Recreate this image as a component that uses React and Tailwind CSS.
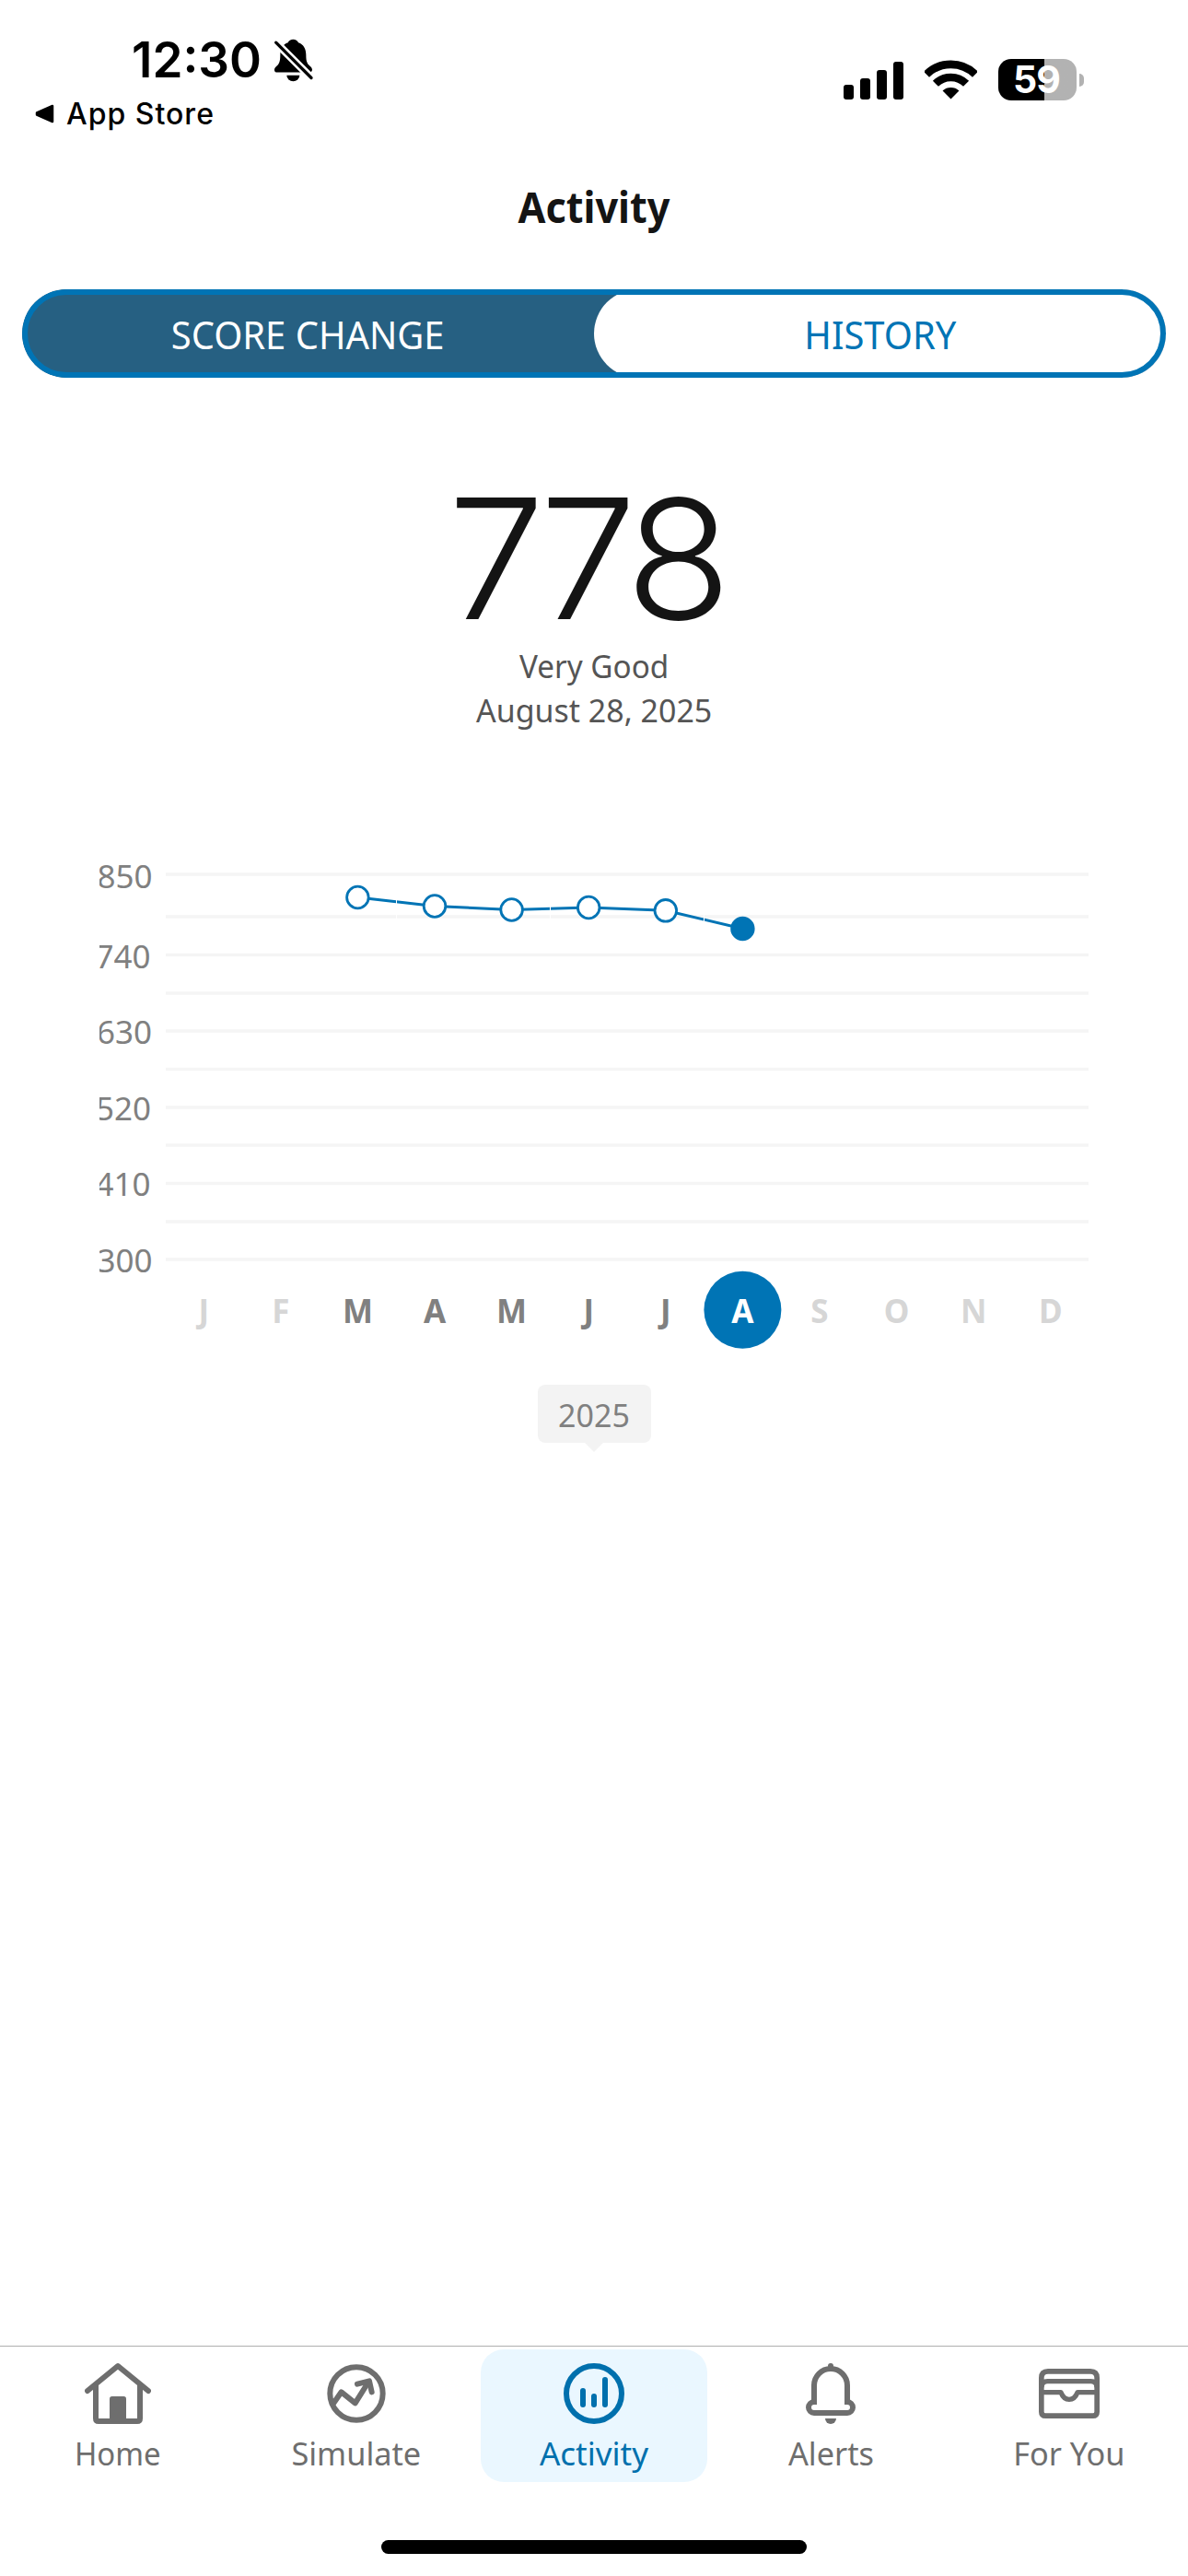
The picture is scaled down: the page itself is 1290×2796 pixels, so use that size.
import React from "react";
import clsx from "clsx";

const MONTHS = ["J", "F", "M", "A", "M", "J", "J", "A", "S", "O", "N", "D"];
const SELECTED_MONTH = 7;

const POINTS = [
  { month: 2, y: 974 },
  { month: 3, y: 983.5 },
  { month: 4, y: 987.5 },
  { month: 5, y: 985 },
  { month: 6, y: 988.3 },
  { month: 7, y: 1008 },
];

const GRID_LINES = [949, 995, 1036.5, 1078, 1119, 1160.5, 1202, 1243, 1284.5, 1326, 1367];

const Y_LABELS = [
  { value: 850, x: 165.5, y: 963.5 },
  { value: 740, x: 163.5, y: 1050.5 },
  { value: 630, x: 165, y: 1133 },
  { value: 520, x: 164, y: 1215.5 },
  { value: 410, x: 163.5, y: 1298 },
  { value: 300, x: 165.5, y: 1380.5 },
];

const monthX = (i) => 221.2 + i * 83.6;

const HomeIcon = () => (
  <svg viewBox="0 0 216 216" className="w-18 h-18" fill="none" stroke="currentColor" strokeWidth="18">
    <path d="M9 99L108 18l99 81" strokeLinecap="round" strokeLinejoin="round" />
    <path d="M36 79v110q0 9 9 9h126q9 0 9-9V79" />
    <path d="M81 200v-75q0-8 8-8h38q8 0 8 8v75z" fill="currentColor" stroke="none" />
  </svg>
);

const SimulateIcon = () => (
  <svg viewBox="0 0 216 216" className="w-18 h-18" fill="none" stroke="currentColor" strokeWidth="18">
    <circle cx="108" cy="108" r="86" />
    <path d="M33 140l26-37 45 36 44-70" strokeLinejoin="round" />
    <path d="M111 77l39-10 8 36" strokeLinecap="round" strokeLinejoin="round" />
  </svg>
);

const ActivityIcon = () => (
  <svg viewBox="0 0 216 216" className="w-18 h-18" fill="none" stroke="currentColor" strokeWidth="18">
    <circle cx="108" cy="108" r="90" />
    <path d="M72 99v45M108 117v27M144 63v81" strokeLinecap="round" />
  </svg>
);

const AlertsIcon = () => (
  <svg viewBox="0 0 216 216" className="w-18 h-18" fill="none" stroke="currentColor" strokeWidth="18">
    <path d="M54 144V81a54 54 0 0 1 108 0v63" />
    <path d="M54 135a18 18 0 0 0 0 36h108a18 18 0 0 0 0-36" />
    <circle cx="108" cy="18" r="9" fill="currentColor" stroke="none" />
    <path d="M90 189h36a18 18 0 0 1-36 0z" fill="currentColor" stroke="none" />
  </svg>
);

const ForYouIcon = () => (
  <svg viewBox="0 0 216 216" className="w-18 h-18" fill="none" stroke="currentColor" strokeWidth="17">
    <path d="M17.500 57q0-21.500 21.500-21.500h138q21.500 0 21.500 21.500v110q0 13.500-13.500 13.500H31q-13.500 0-13.500-13.500z" />
    <path d="M18 88q0-20 20-20h140q20 0 20 20" strokeWidth="16" />
    <path d="M18 104h63q9 23 27 23t27-23h63" strokeWidth="16" strokeLinejoin="round" />
  </svg>
);

const TABS = [
  { label: "Home", Icon: HomeIcon },
  { label: "Simulate", Icon: SimulateIcon },
  { label: "Activity", Icon: ActivityIcon },
  { label: "Alerts", Icon: AlertsIcon },
  { label: "For You", Icon: ForYouIcon },
];

const StatusBar = () => (
  <div className="h-[180px] flex justify-between font-['Inter',sans-serif] text-black">
    <div className="flex flex-col pl-[38px] pt-[42px]">
      <div className="flex items-center h-[46px] pl-[105px]">
        <span className="w-[154px] text-[53px] font-semibold leading-none whitespace-nowrap">12:30</span>
        <svg viewBox="0 0 132 140" className="w-11 h-[47px] shrink-0">
          <path d="M64 2C56 2 50 6 47 12C30 18 22 32 22 52C22 74 18 82 10 89C4 94 3 98 3 102C3 107 7 109 12 109H116C122 109 126 106 126 101C126 96 123 92 118 88C110 81 106 74 106 52C106 32 98 18 81 12C78 6 72 2 64 2Z" />
          <path d="M43 119h42a21 19 0 0 1-42 0z" />
          <path d="M2 6l128 128" stroke="white" strokeWidth="25" />
          <path d="M8 12l115 115" stroke="black" strokeWidth="10" strokeLinecap="round" />
        </svg>
      </div>
      <div className="flex items-center gap-3 h-10 mt-[15px]">
        <svg viewBox="0 0 22 21" className="w-[22px] h-[21px]">
          <path d="M2 9.500L19 2v17L2 11.500z" stroke="black" strokeWidth="2.500" strokeLinejoin="round" />
        </svg>
        <span className="pt-0.5 text-[32px] font-medium leading-none tracking-[1px]">App Store</span>
      </div>
    </div>

    <div className="flex items-center h-[46px] mt-[64px] pr-[113px]">
      <div className="flex items-end gap-[7px] h-[41px]">
        <div className="w-[11px] h-4 rounded-[3px] bg-black" />
        <div className="w-[11px] h-[23px] rounded-[3px] bg-black" />
        <div className="w-[11px] h-8 rounded-[3px] bg-black" />
        <div className="w-[11px] h-[41px] rounded-[3px] bg-black" />
      </div>
      <svg viewBox="0 0 172 128" className="w-[57px] h-[43px] ml-[23px] -mt-0.5" fill="none" stroke="black" strokeWidth="26">
        <path d="M6 46.500a114 114 0 0 1 160 0" />
        <path d="M36 77a71 71 0 0 1 100 0" />
        <path d="M86 127L59 100a40 40 0 0 1 54 0z" fill="black" stroke="none" />
      </svg>
      <div className="flex items-center justify-center w-[85px] h-[45px] ml-[23px] -mt-px rounded-[14px] bg-linear-to-r from-black from-59% to-[#b2b2b2] to-59%">
        <span className="pr-0.5 text-[41px] font-bold leading-none text-white tracking-[-1px]">59</span>
      </div>
      <div className="w-[5px] h-[14px] ml-[3px] rounded-r-full bg-[#b2b2b2]" />
    </div>
  </div>
);

const ScoreChart = () => (
  <svg
    viewBox="108 920 1074 550"
    className="w-[1074px] h-[550px] ml-[108px] mt-[125px] overflow-hidden font-['Noto_Sans',sans-serif]"
  >
    {GRID_LINES.map((y) => (
      <line key={y} x1="180" x2="1182" y1={y} y2={y} stroke="#f5f5f5" strokeWidth="3.500" />
    ))}

    {Y_LABELS.map(({ value, x, y }) => (
      <text key={value} x={x} y={y} textAnchor="end" fontSize="35" fill="#808080">
        {value}
      </text>
    ))}

    <polyline
      points={POINTS.map(({ month, y }) => `${monthX(month)},${y}`).join(" ")}
      fill="none"
      stroke="#0074b5"
      strokeWidth="3"
    />
    {[430.500, 597.500, 764.500].map((x) => (
      <line key={x} x1={x} x2={x} y1="974" y2="1003" stroke="white" strokeWidth="1" />
    ))}
    {POINTS.map(({ month, y }) => (
      <circle
        key={month}
        cx={monthX(month)}
        cy={y}
        r="11.800"
        fill={month === SELECTED_MONTH ? "#0074b5" : "white"}
        stroke="#0074b5"
        strokeWidth="2.800"
      />
    ))}

    <circle cx={monthX(SELECTED_MONTH)} cy="1421.700" r="42" fill="#0074b5" />
    {MONTHS.map((m, i) => {
      const hasScore = POINTS.some((p) => p.month === i);
      const color = hasScore ? "#808080" : "#d6d6d6";
      return (
        <text
          key={i}
          x={monthX(i)}
          y="1436"
          textAnchor="middle"
          fontSize="35"
          fontWeight="700"
          fill={i === SELECTED_MONTH ? "white" : color}
        >
          {m}
        </text>
      );
    })}
  </svg>
);

const TabBar = () => (
  <div className="h-[250px] mt-auto border-t border-[#b0b0b0] pt-[3px]">
    <div className="grid grid-cols-[256px_262px_254px_260px_258px]">
      {TABS.map(({ label, Icon }) => (
        <button
          key={label}
          className={clsx(
            "flex flex-col items-center w-[246px] h-36 mx-auto pt-3 rounded-[25px]",
            label === "Activity" ? "bg-[#eaf7ff] text-[#0070ad]" : "text-[#6e6e6e]"
          )}
        >
          <Icon />
          <span
            className={clsx(
              "mt-[5px] text-[35px] leading-[48px] whitespace-nowrap",
              label === "Home" ? "scale-x-[0.94]" : label !== "Activity" && "scale-x-[0.98]"
            )}
          >
            {label}
          </span>
        </button>
      ))}
    </div>
    <div className="w-[462px] h-[15px] mx-auto mt-[63px] rounded-full bg-black" />
  </div>
);

const App = () => {
  return (
    <div className="w-[1290px] h-[2796px] flex flex-col bg-white overflow-hidden font-['Noto_Sans',sans-serif]">
      <StatusBar />

      <h1 className="pt-0.5 text-center text-[47px] leading-[85px] font-bold text-[#141414] scale-x-[0.92]">Activity</h1>

      {/* Segmented control */}
      <div className="relative flex h-24 mx-6 mt-[47px] rounded-full bg-[#266082] text-[42px] overflow-hidden">
        <button className="w-[621px] text-white">
          <span className="inline-block scale-x-[0.95]">SCORE CHANGE</span>
        </button>
        <button className="w-[621px] rounded-full bg-white text-[#0074b5]">
          <span className="inline-block scale-x-[0.95]">HISTORY</span>
        </button>
        <div className="absolute inset-0 rounded-full border-[6px] border-[#0074b5]" />
      </div>

      {/* Current score */}
      <div className="flex flex-col items-center mt-[117px]">
        <span className="mr-[18px] text-[181px] leading-[160px] font-light tracking-[-9px] scale-x-[1.04] text-[#141414] font-['Inter',sans-serif]">
          778
        </span>
        <div className="mt-3 text-center text-[35px] leading-[48px] text-[#555555]">
          <p className="scale-x-[0.95]">Very Good</p>
          <p className="scale-x-[0.97]">August 28, 2025</p>
        </div>
      </div>

      <ScoreChart />

      {/* Year marker */}
      <div className="flex flex-col items-center mt-[33px]">
        <div className="w-[123px] h-[63px] rounded-lg bg-[#f3f3f3] text-center text-[34px] leading-[66px] text-[#808080]">
          2025
        </div>
        <svg viewBox="0 0 20 10" className="w-5 h-2.5 text-[#f3f3f3]">
          <path d="M0 0h20L10 10z" fill="currentColor" />
        </svg>
      </div>

      <TabBar />
    </div>
  );
};

export default App;
